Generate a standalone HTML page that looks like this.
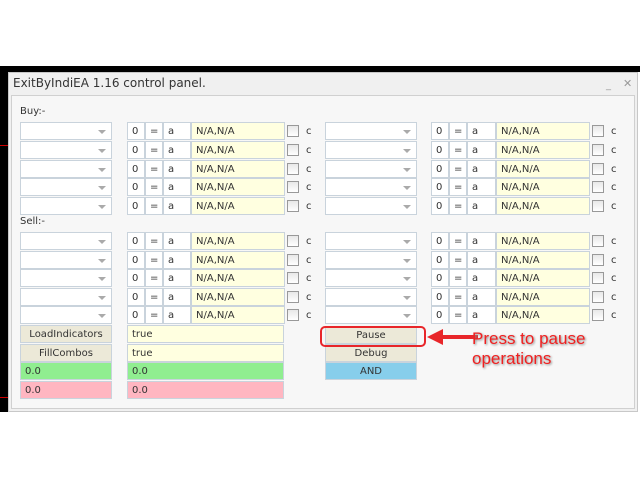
<!DOCTYPE html>
<html><head><meta charset="utf-8"><style>
*{box-sizing:border-box;margin:0;padding:0}
body{width:640px;height:480px;background:#fff;position:relative;overflow:hidden;font-family:"DejaVu Sans","Liberation Sans",sans-serif;font-size:10px;color:#333}
.a{position:absolute}
#blk{left:0;top:66px;width:640px;height:6px;background:#000}
#blkl{left:0;top:66px;width:8px;height:346px;background:#000}
#panel{left:8px;top:72px;width:630px;height:340px;background:#f0f0f0;border:1px solid #c8c8c8}
#title{left:13px;top:76px;font-size:12px;color:#333}
#body{left:11px;top:95px;width:624px;height:314px;background:#f7f7f7;border:1px solid #d0d0d0}
.lbl{font-size:10px;color:#333}
.b{position:absolute;height:18px;background:#fff;border:1px solid #c9d3dc;line-height:17px;padding-left:4px;font-size:10px}
.y{background:#ffffe0}
.cmb::after{content:"";position:absolute;right:5px;top:7px;border-left:4px solid transparent;border-right:4px solid transparent;border-top:4px solid #aaa}
.cb{position:absolute;width:12px;height:12px;border:1px solid #999;background:linear-gradient(#e8e8e8,#fff)}
.c{position:absolute;font-size:10px}
.btn{position:absolute;height:18px;background:#ece9d8;border:1px solid #c9d3dc;text-align:center;line-height:17px;font-size:10px}
</style></head><body>
<div class="a" id="blk"></div><div class="a" id="blkl"></div>
<div class="a" style="left:0;top:145px;width:8px;height:1px;background:#c00"></div>
<div class="a" style="left:0;top:397px;width:8px;height:1px;background:#c00"></div>
<div class="a" id="panel"></div>
<div class="a" id="title">ExitByIndiEA 1.16 control panel.</div>
<div class="a" style="left:606px;top:80px;font-size:10px;color:#999">_</div>
<div class="a" style="left:623px;top:77px;font-size:11px;color:#999">✕</div>
<div class="a" id="body"></div>
<div class="a lbl" style="left:20px;top:106px">Buy:-</div>
<div class="a lbl" style="left:20px;top:216px">Sell:-</div>

<div class="a" style="left:0;top:122px"><div class="b cmb" style="left:20px;width:92px"></div><div class="b" style="left:127px;width:18px">0</div><div class="b" style="left:145px;width:18px">=</div><div class="b" style="left:163px;width:28px">a</div><div class="b y" style="left:191px;width:94px">N/A,N/A</div><div class="cb" style="left:287px;top:3px"></div><div class="c" style="left:306px;top:4px">c</div><div class="b cmb" style="left:325px;width:92px"></div><div class="b" style="left:431px;width:18px">0</div><div class="b" style="left:449px;width:18px">=</div><div class="b" style="left:467px;width:29px">a</div><div class="b y" style="left:496px;width:94px">N/A,N/A</div><div class="cb" style="left:592px;top:3px"></div><div class="c" style="left:611px;top:4px">c</div></div>
<div class="a" style="left:0;top:141px"><div class="b cmb" style="left:20px;width:92px"></div><div class="b" style="left:127px;width:18px">0</div><div class="b" style="left:145px;width:18px">=</div><div class="b" style="left:163px;width:28px">a</div><div class="b y" style="left:191px;width:94px">N/A,N/A</div><div class="cb" style="left:287px;top:3px"></div><div class="c" style="left:306px;top:4px">c</div><div class="b cmb" style="left:325px;width:92px"></div><div class="b" style="left:431px;width:18px">0</div><div class="b" style="left:449px;width:18px">=</div><div class="b" style="left:467px;width:29px">a</div><div class="b y" style="left:496px;width:94px">N/A,N/A</div><div class="cb" style="left:592px;top:3px"></div><div class="c" style="left:611px;top:4px">c</div></div>
<div class="a" style="left:0;top:160px"><div class="b cmb" style="left:20px;width:92px"></div><div class="b" style="left:127px;width:18px">0</div><div class="b" style="left:145px;width:18px">=</div><div class="b" style="left:163px;width:28px">a</div><div class="b y" style="left:191px;width:94px">N/A,N/A</div><div class="cb" style="left:287px;top:3px"></div><div class="c" style="left:306px;top:4px">c</div><div class="b cmb" style="left:325px;width:92px"></div><div class="b" style="left:431px;width:18px">0</div><div class="b" style="left:449px;width:18px">=</div><div class="b" style="left:467px;width:29px">a</div><div class="b y" style="left:496px;width:94px">N/A,N/A</div><div class="cb" style="left:592px;top:3px"></div><div class="c" style="left:611px;top:4px">c</div></div>
<div class="a" style="left:0;top:178px"><div class="b cmb" style="left:20px;width:92px"></div><div class="b" style="left:127px;width:18px">0</div><div class="b" style="left:145px;width:18px">=</div><div class="b" style="left:163px;width:28px">a</div><div class="b y" style="left:191px;width:94px">N/A,N/A</div><div class="cb" style="left:287px;top:3px"></div><div class="c" style="left:306px;top:4px">c</div><div class="b cmb" style="left:325px;width:92px"></div><div class="b" style="left:431px;width:18px">0</div><div class="b" style="left:449px;width:18px">=</div><div class="b" style="left:467px;width:29px">a</div><div class="b y" style="left:496px;width:94px">N/A,N/A</div><div class="cb" style="left:592px;top:3px"></div><div class="c" style="left:611px;top:4px">c</div></div>
<div class="a" style="left:0;top:197px"><div class="b cmb" style="left:20px;width:92px"></div><div class="b" style="left:127px;width:18px">0</div><div class="b" style="left:145px;width:18px">=</div><div class="b" style="left:163px;width:28px">a</div><div class="b y" style="left:191px;width:94px">N/A,N/A</div><div class="cb" style="left:287px;top:3px"></div><div class="c" style="left:306px;top:4px">c</div><div class="b cmb" style="left:325px;width:92px"></div><div class="b" style="left:431px;width:18px">0</div><div class="b" style="left:449px;width:18px">=</div><div class="b" style="left:467px;width:29px">a</div><div class="b y" style="left:496px;width:94px">N/A,N/A</div><div class="cb" style="left:592px;top:3px"></div><div class="c" style="left:611px;top:4px">c</div></div>
<div class="a" style="left:0;top:232px"><div class="b cmb" style="left:20px;width:92px"></div><div class="b" style="left:127px;width:18px">0</div><div class="b" style="left:145px;width:18px">=</div><div class="b" style="left:163px;width:28px">a</div><div class="b y" style="left:191px;width:94px">N/A,N/A</div><div class="cb" style="left:287px;top:3px"></div><div class="c" style="left:306px;top:4px">c</div><div class="b cmb" style="left:325px;width:92px"></div><div class="b" style="left:431px;width:18px">0</div><div class="b" style="left:449px;width:18px">=</div><div class="b" style="left:467px;width:29px">a</div><div class="b y" style="left:496px;width:94px">N/A,N/A</div><div class="cb" style="left:592px;top:3px"></div><div class="c" style="left:611px;top:4px">c</div></div>
<div class="a" style="left:0;top:251px"><div class="b cmb" style="left:20px;width:92px"></div><div class="b" style="left:127px;width:18px">0</div><div class="b" style="left:145px;width:18px">=</div><div class="b" style="left:163px;width:28px">a</div><div class="b y" style="left:191px;width:94px">N/A,N/A</div><div class="cb" style="left:287px;top:3px"></div><div class="c" style="left:306px;top:4px">c</div><div class="b cmb" style="left:325px;width:92px"></div><div class="b" style="left:431px;width:18px">0</div><div class="b" style="left:449px;width:18px">=</div><div class="b" style="left:467px;width:29px">a</div><div class="b y" style="left:496px;width:94px">N/A,N/A</div><div class="cb" style="left:592px;top:3px"></div><div class="c" style="left:611px;top:4px">c</div></div>
<div class="a" style="left:0;top:269px"><div class="b cmb" style="left:20px;width:92px"></div><div class="b" style="left:127px;width:18px">0</div><div class="b" style="left:145px;width:18px">=</div><div class="b" style="left:163px;width:28px">a</div><div class="b y" style="left:191px;width:94px">N/A,N/A</div><div class="cb" style="left:287px;top:3px"></div><div class="c" style="left:306px;top:4px">c</div><div class="b cmb" style="left:325px;width:92px"></div><div class="b" style="left:431px;width:18px">0</div><div class="b" style="left:449px;width:18px">=</div><div class="b" style="left:467px;width:29px">a</div><div class="b y" style="left:496px;width:94px">N/A,N/A</div><div class="cb" style="left:592px;top:3px"></div><div class="c" style="left:611px;top:4px">c</div></div>
<div class="a" style="left:0;top:288px"><div class="b cmb" style="left:20px;width:92px"></div><div class="b" style="left:127px;width:18px">0</div><div class="b" style="left:145px;width:18px">=</div><div class="b" style="left:163px;width:28px">a</div><div class="b y" style="left:191px;width:94px">N/A,N/A</div><div class="cb" style="left:287px;top:3px"></div><div class="c" style="left:306px;top:4px">c</div><div class="b cmb" style="left:325px;width:92px"></div><div class="b" style="left:431px;width:18px">0</div><div class="b" style="left:449px;width:18px">=</div><div class="b" style="left:467px;width:29px">a</div><div class="b y" style="left:496px;width:94px">N/A,N/A</div><div class="cb" style="left:592px;top:3px"></div><div class="c" style="left:611px;top:4px">c</div></div>
<div class="a" style="left:0;top:306px"><div class="b cmb" style="left:20px;width:92px"></div><div class="b" style="left:127px;width:18px">0</div><div class="b" style="left:145px;width:18px">=</div><div class="b" style="left:163px;width:28px">a</div><div class="b y" style="left:191px;width:94px">N/A,N/A</div><div class="cb" style="left:287px;top:3px"></div><div class="c" style="left:306px;top:4px">c</div><div class="b cmb" style="left:325px;width:92px"></div><div class="b" style="left:431px;width:18px">0</div><div class="b" style="left:449px;width:18px">=</div><div class="b" style="left:467px;width:29px">a</div><div class="b y" style="left:496px;width:94px">N/A,N/A</div><div class="cb" style="left:592px;top:3px"></div><div class="c" style="left:611px;top:4px">c</div></div>

<div class="btn" style="left:20px;top:325px;width:92px">LoadIndicators</div>
<div class="btn" style="left:20px;top:344px;width:92px">FillCombos</div>
<div class="b" style="left:20px;top:362px;width:92px;background:#90ee90">0.0</div>
<div class="b" style="left:20px;top:381px;width:92px;background:#ffb6c1">0.0</div>
<div class="b y" style="left:127px;top:325px;width:157px">true</div>
<div class="b y" style="left:127px;top:344px;width:157px">true</div>
<div class="b" style="left:127px;top:362px;width:157px;background:#90ee90">0.0</div>
<div class="b" style="left:127px;top:381px;width:157px;background:#ffb6c1">0.0</div>
<div class="btn" style="left:325px;top:326px;width:92px">Pause</div>
<div class="btn" style="left:325px;top:344px;width:92px">Debug</div>
<div class="btn" style="left:325px;top:362px;width:92px;background:#87ceeb">AND</div>
<div class="a" style="left:320px;top:326px;width:106px;height:21px;border:2px solid #e8262a;border-radius:5px"></div>
<svg class="a" style="left:420px;top:326px" width="60" height="22"><path d="M58 11 H18" stroke="#e8262a" stroke-width="4"/><path d="M7 11 L23 3 L23 19 Z" fill="#e8262a"/></svg>
<div class="a" style="left:472px;top:329px;font-family:'Liberation Sans',sans-serif;font-size:17px;line-height:20px;color:#f02020;text-shadow:1px 1px 2px #888">Press to pause<br>operations</div>
</body></html>
